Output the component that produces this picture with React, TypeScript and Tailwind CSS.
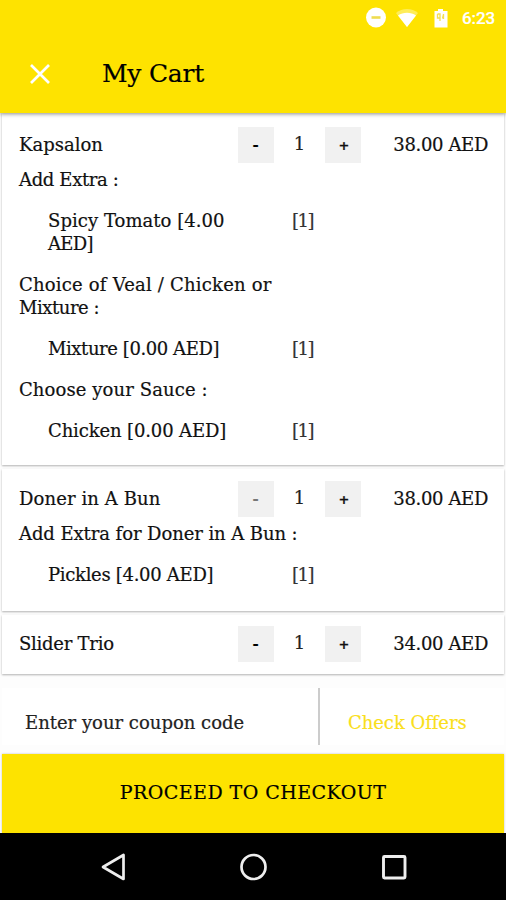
type Option = { label: string[]; tracking: string[]; top: string; choice: string[]; choiceTracking: string[] };

function Stepper({ muted = false }: { muted?: boolean }) {
  return (
    <div className="mt-[2px] flex w-[123px] shrink-0 items-center justify-between">
      <button className={`flex h-[36px] w-[36px] items-center justify-center bg-[#f1f1f1] pl-[0px] pr-[1px] text-[15px] font-bold ${muted ? 'text-[#777]' : 'text-black'}`}>-</button>
      <span className="pb-[4px] text-[#222]">1</span>
      <button className="flex h-[36px] w-[36px] items-center justify-center bg-[#f1f1f1] pl-[2px] font-['DejaVu_Sans',sans-serif] text-[13px] font-bold">+</button>
    </div>
  );
}

function ItemRow({ name, tracking, price, muted }: { name: string; tracking: string; price: string; muted?: boolean }) {
  return (
    <div className="flex h-[36px] items-center">
      <span className={`w-[219px] shrink-0 ${tracking}`}>{name}</span>
      <Stepper muted={muted} />
      <span className="ml-auto tracking-[-0.35px]">{price}</span>
    </div>
  );
}

function OptionGroup({ option }: { option: Option }) {
  return (
    <div className={option.top}>
      {option.label.map((line, i) => (
        <p key={line} className={option.tracking[i]}>{line}</p>
      ))}
      <div className="mt-[18px] flex">
        <div className="ml-[29px] w-[244px] shrink-0">
          {option.choice.map((line, i) => (
            <p key={line} className={option.choiceTracking[i]}>{line}</p>
          ))}
        </div>
        <span className="tracking-[-1.5px] text-[#333]">[1]</span>
      </div>
    </div>
  );
}

const kapsalonOptions: Option[] = [
  { label: ['Add Extra :'], tracking: ['tracking-[-0.35px]'], top: 'pt-[6px]', choice: ['Spicy Tomato [4.00', 'AED]'], choiceTracking: ['tracking-[0.05px]', 'tracking-[-0.7px]'] },
  { label: ['Choice of Veal / Chicken or', 'Mixture :'], tracking: ['tracking-[0.2px]', 'tracking-[-0.45px]'], top: 'pt-[18px]', choice: ['Mixture [0.00 AED]'], choiceTracking: ['tracking-[-0.42px]'] },
  { label: ['Choose your Sauce :'], tracking: ['tracking-[0.1px]'], top: 'pt-[18px]', choice: ['Chicken [0.00 AED]'], choiceTracking: ['tracking-[-0.13px]'] },
];

const donerOptions: Option[] = [
  { label: ['Add Extra for Doner in A Bun :'], tracking: ['tracking-[-0.08px]'], top: 'pt-[6px]', choice: ['Pickles [4.00 AED]'], choiceTracking: ['tracking-[-0.3px]'] },
];

const card = 'mx-[2px] bg-white pl-[17px] pr-[16px] shadow-[0_1px_2px_rgba(0,0,0,0.3)]';

export default function App() {
  return (
    <div className="flex h-[900px] w-[506px] flex-col overflow-hidden bg-[#fdfdfd] font-['DejaVu_Serif',serif] text-[18px] leading-[23px] text-[#111] [-webkit-text-stroke:0.2px]">
      <header className="relative z-10 h-[113px] shrink-0 bg-[#fee300] shadow-[0_1px_4px_rgba(0,0,0,0.45)]">
        <div className="flex h-[36px] items-center pl-[365px] text-white">
          <svg className="h-[22px] w-[22px]" viewBox="0 0 22 22" fill="none">
            <circle cx="11" cy="10.500" r="10" fill="white" />
            <path d="M6.500 10.500h9" stroke="#efdc50" strokeWidth="2.600" />
          </svg>
          <svg className="ml-[8px] h-[22px] w-[24px]" viewBox="0 0 24 22">
            <path d="M1 6C7 .5 17 .5 23 6L12 20Z" fill="white" fillOpacity=".35" />
            <path d="M3 8.500C8 4.700 16 4.700 21 8.500L12 20Z" fill="white" />
          </svg>
          <svg className="ml-[14px] h-[22px] w-[16px]" viewBox="0 0 16 22">
            <path d="M5 2h5v2h4.500v16.500h-13V4H5z" fill="white" />
            <path d="M4.500 7v4h2.500V7h-2.500m2.500 4v3M10.500 7.500l-1 4M10.500 7v5" fill="none" stroke="#f4df52" strokeWidth="1.300" />
          </svg>
          <span className="ml-[13px] font-['Roboto',sans-serif] text-[17px] font-medium tracking-[-0.1px]">6:23</span>
        </div>
        <div className="flex h-[76px] items-center pl-[29px]">
          <svg className="h-[22px] w-[22px]" viewBox="0 0 22 22" fill="none" stroke="white" strokeWidth="2.700">
            <path d="M2 2l18 18M20 2L2 20" />
          </svg>
          <h1 className="ml-[51px] pb-[2px] text-[25px] tracking-[-0.25px] text-black">My Cart</h1>
        </div>
      </header>

      <section className={`${card} h-[352px] shrink-0 pt-[13px]`}>
        <ItemRow name="Kapsalon" tracking="tracking-normal" price="38.00 AED" />
        {kapsalonOptions.map((o) => <OptionGroup key={o.label[0]} option={o} />)}
      </section>
      <section className={`${card} mt-[4px] h-[142px] shrink-0 pt-[11px]`}>
        <ItemRow name="Doner in A Bun" tracking="tracking-[0.1px]" price="38.00 AED" muted />
        {donerOptions.map((o) => <OptionGroup key={o.label[0]} option={o} />)}
      </section>
      <section className={`${card} mt-[4px] h-[59px] shrink-0 pt-[10px]`}>
        <ItemRow name="Slider Trio" tracking="tracking-[-0.25px]" price="34.00 AED" />
      </section>

      <section className="mx-[2px] mt-[14px] flex h-[57px] shrink-0 bg-white">
        <div className="flex w-[318px] items-center border-r-2 border-[#ccc] pl-[23px] pt-[11px] text-[#222]">Enter your coupon code</div>
        <button className="ml-[28px] pt-[11px] tracking-[-0.05px] text-[#fadf1c]">Check Offers</button>
      </section>

      <button className="mx-[2px] mt-[9px] h-[79px] shrink-0 bg-[#fde300] pb-[3px] text-[19px] tracking-[0.45px] text-black shadow-[0_0_2px_rgba(0,0,0,0.25)]">PROCEED TO CHECKOUT</button>

      <nav className="relative flex flex-1 items-center justify-between bg-black pl-[100px] pr-[98px]">
        <svg className="h-[28px] w-[27px]" viewBox="0 0 27 28" fill="none" stroke="#eee" strokeWidth="2.700">
          <path d="M23.500 2v24L3 14Z" strokeLinejoin="round" />
        </svg>
        <svg className="h-[28px] w-[28px]" viewBox="0 0 28 28" fill="none" stroke="#eee" strokeWidth="2.700">
          <circle cx="13.500" cy="14" r="12" />
        </svg>
        <svg className="h-[28px] w-[28px]" viewBox="0 0 28 28" fill="none" stroke="#eee" strokeWidth="2.900">
          <rect x="3.500" y="3.500" width="21.500" height="21.500" rx="1" />
        </svg>
      </nav>
    </div>
  );
}
